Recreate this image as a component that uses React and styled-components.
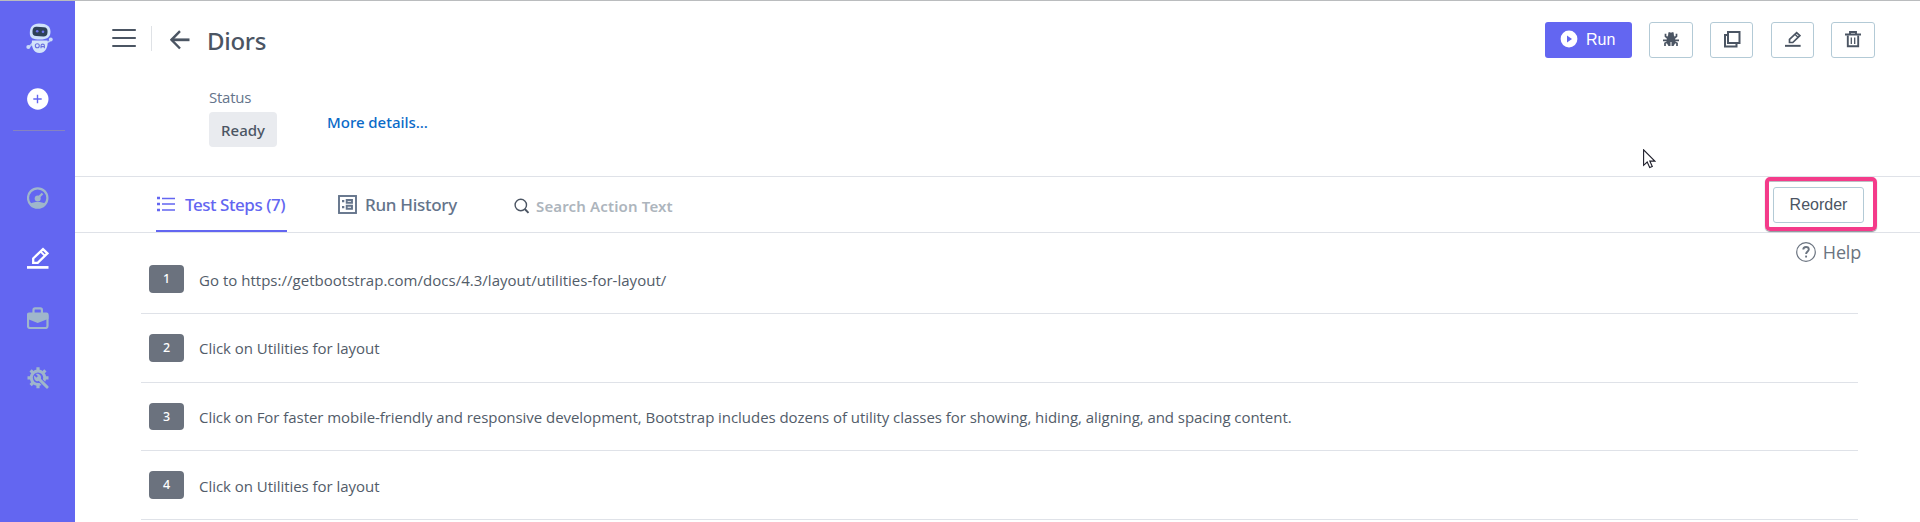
import React from 'react';
import styled, { createGlobalStyle } from 'styled-components';

const Global = createGlobalStyle`
  * { box-sizing: border-box; }
  body {
    margin: 0;
    background: #fff;
    color: #4b5563;
    font-family: 'Open Sans', 'Noto Sans', sans-serif;
    overflow: hidden;
  }
  button { font: inherit; margin: 0; cursor: pointer; }
  svg { display: block; flex: none; }
`;

const Page = styled.div`
  display: flex;
  height: 522px;
  border-top: 1px solid #babcbe;
  overflow: hidden;
`;

const Sidebar = styled.nav`
  flex: none;
  width: 75px;
  display: flex;
  flex-direction: column;
  align-items: center;
  padding: 22px 0 0 1px;
  background: #6366f1;
`;

const Logo = styled.div`
  margin-left: 3px;
`;

const AddButton = styled.button`
  width: 22px;
  height: 22px;
  margin-top: 33px;
  padding: 0;
  border: 0;
  background: none;
`;

const Divider = styled.hr`
  width: 52px;
  height: 1px;
  margin: 20px 0 56px 2px;
  border: 0;
  background: #8683c0;
`;

const NavLinks = styled.div`
  display: flex;
  flex-direction: column;
  gap: 38px;
`;

const NavItem = styled.a`
  display: block;
  width: 22px;
  height: 22px;
  color: ${(p) => (p.$active ? '#fff' : '#9fb6cb')};
`;

const Main = styled.main`
  flex: 1;
  min-width: 0;
  display: flex;
  flex-direction: column;
`;

const Header = styled.header`
  height: 62px;
  display: flex;
  align-items: flex-start;
  padding: 21px 45px 0 37px;
`;

const MenuIcon = styled.div`
  padding-top: 7px;
`;

const Separator = styled.div`
  width: 1px;
  height: 25px;
  margin: 4px 18px 0 15px;
  background: #dfe2e6;
`;

const BackIcon = styled.div`
  padding-top: 8px;
`;

const Title = styled.h1`
  margin: 0 0 0 17px;
  padding-top: 1px;
  font: 500 24px/36px 'Noto Sans', sans-serif;
  letter-spacing: -0.3px;
`;

const Actions = styled.div`
  display: flex;
  margin-left: auto;
`;

const RunButton = styled.button`
  display: flex;
  align-items: center;
  gap: 8px;
  width: 87px;
  height: 36px;
  padding: 0 0 2px 15px;
  border: 0;
  border-radius: 3px;
  background: #6366f1;
  color: #fff;
  && { font: 400 16px/20px 'Liberation Sans', Arial, sans-serif; }
`;

const RunText = styled.span`
  padding-top: 1px;
`;

const IconButton = styled.button`
  display: flex;
  align-items: center;
  justify-content: center;
  width: ${(p) => p.$w}px;
  height: 36px;
  margin-left: ${(p) => p.$gap}px;
  padding: 0 0 2px;
  border: 1px solid #b3cad6;
  border-radius: 3px;
  background: #fff;
  color: #4b5563;
`;

const Details = styled.section`
  height: 113px;
  display: flex;
  align-items: flex-start;
  gap: 50px;
  padding: 23px 0 0 134px;
`;

const StatusLabel = styled.div`
  color: #64748b;
  font-size: 15px;
  line-height: 22px;
  letter-spacing: -0.25px;
`;

const StatusChip = styled.div`
  width: 68px;
  height: 35px;
  margin-top: 4px;
  border-radius: 4px;
  background: #e9ebef;
  text-align: center;
  font: 500 15px/36px 'Noto Sans', sans-serif;
`;

const DetailsLink = styled.a`
  margin-top: 26px;
  color: #0a6ac8;
  font: 500 15px/20px 'Noto Sans', sans-serif;
  letter-spacing: -0.03px;
`;

const TabBar = styled.div`
  height: 57px;
  display: flex;
  align-items: stretch;
  padding: 0 43px 0 81px;
  border-top: 1px solid #dfe2e8;
  border-bottom: 1px solid #dfe2e8;
`;

const Tab = styled.a`
  display: flex;
  align-items: center;
  gap: ${(p) => p.$gap}px;
  width: ${(p) => p.$w}px;
  margin-right: ${(p) => p.$mr}px;
  padding-top: 1px;
  border-bottom: 2px solid ${(p) => (p.$active ? '#6366f1' : 'transparent')};
  color: ${(p) => (p.$active ? '#6366f1' : '#64748b')};
  font: 500 17px/24px 'Noto Sans', sans-serif;
  letter-spacing: ${(p) => p.$ls}px;
  white-space: nowrap;
`;

const TabText = styled.span`
  padding-top: 1px;
`;

const Search = styled.label`
  display: flex;
  align-items: center;
  gap: 6px;
  padding-top: 2px;
  color: #adb5bd;
  font: 600 15px/22px 'Noto Sans', sans-serif;
  letter-spacing: 0.15px;
`;

const Highlight = styled.div`
  width: 112px;
  height: 54px;
  margin-left: auto;
  padding: 6px 9px 0 4px;
  border: 4px solid #f43b8a;
  border-radius: 5px;
  box-shadow: 0 1px 1px rgba(60, 70, 80, 0.6), inset 0 1px 0 rgba(60, 70, 80, 0.35);
`;

const ReorderButton = styled.button`
  width: 91px;
  height: 36px;
  padding: 0;
  border: 1px solid #b3cad6;
  border-radius: 3px;
  background: #fff;
  color: #4b5563;
  && { font: 400 16px/32px 'Liberation Sans', Arial, sans-serif; }
`;

const StepArea = styled.section`
  position: relative;
  flex: 1;
  padding: 12.33px 62px 0 66px;
`;

const Help = styled.a`
  position: absolute;
  top: 7px;
  right: 59px;
  display: flex;
  align-items: center;
  gap: 7px;
  color: #6b7480;
  font-size: 18px;
  line-height: 24px;
  letter-spacing: -0.2px;
`;

const Step = styled.div`
  display: flex;
  align-items: center;
  gap: 15px;
  height: 68.67px;
  padding-left: 8px;
  border-bottom: 1px solid #dfe2e8;
`;

const StepNumber = styled.span`
  width: 35px;
  height: 27.5px;
  border-radius: 4px;
  background: #6b727e;
  color: #fff;
  text-align: center;
  font: 500 12.5px/27.5px 'Noto Sans', sans-serif;
`;

const StepText = styled.span`
  padding-top: 0.8px;
  color: #525c69;
  font-size: 15px;
  line-height: 22px;
  letter-spacing: ${(p) => p.$ls}px;
  white-space: nowrap;
`;

const Cursor = styled.svg`
  position: absolute;
  left: 1643px;
  top: 149px;
`;

const Robot = () => (
  <svg width="28" height="32" viewBox="0 0 28 32">
    <path d="M7 20 3 24M20 20l4-2" stroke="#b9cdf5" strokeWidth="1.8" />
    <circle cx="2.3" cy="24" r="2" fill="#c9daf8" />
    <circle cx="24.8" cy="16.5" r="1.9" fill="#c9daf8" />
    <path d="M6 17.5h15.500c1 6-2 12.500-8 12.500S5 23.500 6 17.500Z" fill="#d3e3fa" />
    <path d="M3.800 10C3.800 4 7 .600 13 .600c8 0 11.500 3 11.500 8.400 0 5-3.500 7.500-10.500 7.500S3.800 15 3.800 10Z" fill="#cfe0fa" />
    <rect x="6.500" y="4" width="15" height="9.300" rx="4" fill="#2e4057" transform="rotate(3 14 9)" />
    <circle cx="11.200" cy="8.300" r="1.300" fill="#6f74f0" />
    <circle cx="17" cy="8.700" r="1.300" fill="#6f74f0" />
    <circle cx="11.300" cy="22.800" r="2" fill="none" stroke="#6a70e0" strokeWidth="1.100" />
    <path d="M15 25.300v-2.500a1.700 1.700 0 0 1 3.400 0v2.500M15 23.600h3.400" fill="none" stroke="#6a70e0" strokeWidth="1.100" />
  </svg>
);

const Plus = () => (
  <svg width="22" height="22" viewBox="0 0 22 22">
    <circle cx="10.800" cy="11" r="10.700" fill="#fff" />
    <path d="M10.500 6.800v8.400M6.300 11h8.400" stroke="#6366f1" strokeWidth="1.400" />
  </svg>
);

const Gauge = () => (
  <svg width="22" height="22" viewBox="0 0 22 22" fill="none">
    <circle cx="10.700" cy="11" r="9.700" stroke="currentColor" strokeWidth="2.200" />
    <path d="M3 16.800c4-2.400 11.500-2.400 15.500 0A10 10 0 0 1 10.700 21 10 10 0 0 1 3 16.800Z" fill="currentColor" />
    <circle cx="10.700" cy="11.500" r="3" fill="currentColor" />
    <path d="m11 11 4.500-4.500" stroke="currentColor" strokeWidth="2.300" />
  </svg>
);

const Pencil = ({ size = 22 }) => (
  <svg width={size} height={size} viewBox="0 0 22 22" fill="none">
    <path d="M6.200 15.800v-4.400L16 2.200l4.400 4.200-9.700 9.400H6.200Z" stroke="currentColor" strokeWidth="2.300" />
    <path d="m13.700 4.600 4.100 4" stroke="currentColor" strokeWidth="2" />
    <path d="M0 20.400h21.500" stroke="currentColor" strokeWidth="2.700" />
  </svg>
);

const Briefcase = () => (
  <svg width="22" height="22" viewBox="0 0 22 22" fill="none">
    <path d="M6.500 6V3c0-1 .500-1.600 1.500-1.600h5.400c1 0 1.500.600 1.500 1.600v3" stroke="currentColor" strokeWidth="2.200" />
    <path d="M0 7.500c0-1.200.600-2 2-2h17.500c1.400 0 2 .800 2 2v4.300l-10.800 4.200L0 11.800V7.500Z" fill="currentColor" />
    <rect x="1" y="7" width="19.500" height="14" rx="2" stroke="currentColor" strokeWidth="2.200" />
  </svg>
);

const GearWrench = () => (
  <svg width="22" height="22" viewBox="0 0 22 22" fill="none">
    <path
      d="M11 .300v21M.500 10.800h21M3.600 3.400l14.800 14.800M18.400 3.400 3.600 18.200"
      stroke="currentColor"
      strokeWidth="3.200"
    />
    <circle cx="11" cy="10.800" r="8.200" fill="currentColor" />
    <circle cx="11" cy="10.800" r="5.200" fill="#6366f1" />
    <path d="m13 13 8 8" stroke="#6366f1" strokeWidth="4.800" />
    <path d="m11 11 9 9" stroke="currentColor" strokeWidth="3.100" strokeLinecap="round" />
    <path d="M7.300 8.500 9.800 11l1.500-1.500-2.500-2.500c2.500-.900 6 1.200 5.200 4.800-.900 2.200-3.100 2.900-4.900 2.100-1.800-.900-2.500-3.300-1.800-5.400Z" fill="currentColor" />
  </svg>
);

const Bars = () => (
  <svg width="24" height="20" viewBox="0 0 24 20" stroke="#4b5563" strokeWidth="2">
    <path d="M.300 1h23.500M.300 9h23.500M.300 17h23.500" />
  </svg>
);

const Arrow = () => (
  <svg width="20" height="20" viewBox="0 0 20 20" fill="none" stroke="#4b5563">
    <path d="M19.500 9.800H1.500" strokeWidth="2.800" />
    <path d="M10 1.100 1.500 9.800l8.500 8.700" strokeWidth="2.400" />
  </svg>
);

const Play = () => (
  <svg width="18" height="18" viewBox="0 0 18 18">
    <circle cx="9" cy="9" r="8.400" fill="#fff" />
    <path d="M7 5.500 12 9l-5 3.500Z" fill="#6366f1" />
  </svg>
);

const Bug = () => (
  <svg width="16" height="16" viewBox="0 0 16 16" fill="none">
    <path d="M3.800 8 4.500 5 8 3l3.500 2 .700 3-.200 4.500L10.500 15h-5L4 12.500 3.800 8ZM5 4.500a3 3 0 0 1 6 0Z" fill="currentColor" />
    <path d="M4.500 7 2.500 5.400V2.800M11.500 7l2-1.600V2.800M4.500 9.300H0M11.500 9.300H16M4.500 11l-2.500 1.300V15M11.500 11l2.500 1.300V15M6.300 3V1.200M9.700 3V1.200" stroke="currentColor" strokeWidth="1.700" />
    <path d="M8 11v4" stroke="#fff" strokeWidth="1" />
  </svg>
);

const Copy = () => (
  <svg width="18" height="18" viewBox="0 0 18 18" fill="none" stroke="currentColor" strokeWidth="2">
    <path d="M5 2h11.500v11H5zM5 5H2v11.500h11.500V13" />
  </svg>
);

const Trash = () => (
  <svg width="16" height="18" viewBox="0 0 16 18" fill="none" stroke="currentColor">
    <path d="M0 4.500h16" strokeWidth="2" />
    <path d="M5 4.500V2h6v2.500M2.800 5.500v10.700h10.400V5.500" strokeWidth="1.900" />
    <path d="M6.300 7.500v6.500M9.700 7.500v6.500" strokeWidth="1.300" />
  </svg>
);

const ListIcon = () => (
  <svg width="19" height="16" viewBox="0 0 19 16" stroke="currentColor" fill="none">
    <path d="M6 2.500h13M6 8h13M6 14h13" strokeWidth="1.700" />
    <path d="M1 2h3M1 8h3M1 14h3" strokeWidth="2.600" />
  </svg>
);

const HistoryIcon = () => (
  <svg width="19" height="19" viewBox="0 0 19 19" stroke="currentColor" fill="none">
    <rect x="1" y="1" width="17" height="17" strokeWidth="1.900" />
    <path d="M4 6.200h2.300M4 12.200h2.300" strokeWidth="2.200" />
    <path d="M8.700 5H14v2.700H8.700zM8.700 10.800H14v2.900H8.700z" strokeWidth="1.900" />
  </svg>
);

const SearchIcon = () => (
  <svg width="16" height="16" viewBox="0 0 16 16" stroke="#4b5563" fill="none" strokeWidth="1.400">
    <circle cx="6.800" cy="7" r="5.700" />
    <path d="m10.800 11 3.700 3.900" strokeWidth="1.900" />
  </svg>
);

const HelpIcon = () => (
  <svg width="20" height="20" viewBox="0 0 20 20" stroke="currentColor" fill="none">
    <circle cx="10" cy="10" r="9.300" strokeWidth="1.200" />
    <path d="M7.300 7.600C7.300 5.900 8.400 5 10 5s2.800.900 2.800 2.400c0 1.900-2.700 2.200-2.700 4.500" strokeWidth="1.900" />
    <path d="M10.100 13.600v1.900" strokeWidth="1.900" />
  </svg>
);

const steps = [
  { text: 'Go to https://getbootstrap.com/docs/4.3/layout/utilities-for-layout/', ls: 0.02 },
  { text: 'Click on Utilities for layout', ls: -0.04 },
  {
    text: 'Click on For faster mobile-friendly and responsive development, Bootstrap includes dozens of utility classes for showing, hiding, aligning, and spacing content.',
    ls: -0.05,
  },
  { text: 'Click on Utilities for layout', ls: -0.04 },
];

export default function App() {
  return (
    <>
      <Global />
      <Page>
        <Sidebar>
          <Logo><Robot /></Logo>
          <AddButton aria-label="Add"><Plus /></AddButton>
          <Divider />
          <NavLinks>
            <NavItem><Gauge /></NavItem>
            <NavItem $active><Pencil /></NavItem>
            <NavItem><Briefcase /></NavItem>
            <NavItem><GearWrench /></NavItem>
          </NavLinks>
        </Sidebar>
        <Main>
          <Header>
            <MenuIcon><Bars /></MenuIcon>
            <Separator />
            <BackIcon><Arrow /></BackIcon>
            <Title>Diors</Title>
            <Actions>
              <RunButton><Play /><RunText>Run</RunText></RunButton>
              <IconButton $w={44} $gap={17} aria-label="Debug"><Bug /></IconButton>
              <IconButton $w={43} $gap={17} aria-label="Copy"><Copy /></IconButton>
              <IconButton $w={43} $gap={18} aria-label="Edit"><Pencil size={16} /></IconButton>
              <IconButton $w={44} $gap={17} aria-label="Delete"><Trash /></IconButton>
            </Actions>
          </Header>
          <Details>
            <div>
              <StatusLabel>Status</StatusLabel>
              <StatusChip>Ready</StatusChip>
            </div>
            <DetailsLink>More details...</DetailsLink>
          </Details>
          <TabBar>
            <Tab $active $w={131} $mr={51} $gap={10} $ls={-0.45}><ListIcon /><TabText>Test Steps (7)</TabText></Tab>
            <Tab $w={122} $mr={54} $gap={8} $ls={-0.3}><HistoryIcon /><TabText>Run History</TabText></Tab>
            <Search><SearchIcon />Search Action Text</Search>
            <Highlight><ReorderButton>Reorder</ReorderButton></Highlight>
          </TabBar>
          <StepArea>
            {steps.map((s, i) => (
              <Step key={i}>
                <StepNumber>{i + 1}</StepNumber>
                <StepText $ls={s.ls}>{s.text}</StepText>
              </Step>
            ))}
            <Help><HelpIcon />Help</Help>
          </StepArea>
        </Main>
      </Page>
      <Cursor width="13" height="20" viewBox="0 0 13 20">
        <path d="M.600.800v15.500l3.600-3.300 2.500 5.500 2.600-1.100-2.500-5.300h5Z" fill="#fff" stroke="#1f1f2b" strokeWidth="1.100" />
      </Cursor>
    </>
  );
}
